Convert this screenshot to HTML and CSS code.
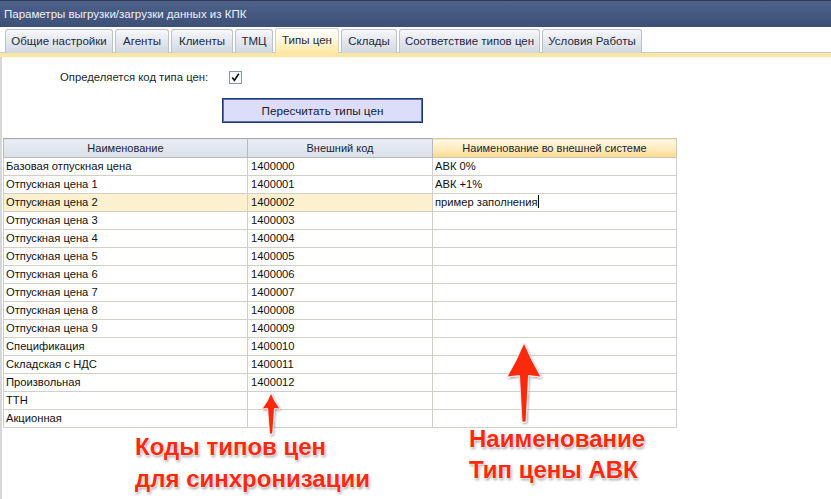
FILE: index.html
```html
<!DOCTYPE html>
<html lang="ru">
<head>
<meta charset="utf-8">
<title>Параметры выгрузки/загрузки данных из КПК</title>
<link rel="stylesheet" href="styles.css">
</head>
<body>
<div class="window">
  <div class="titlebar">Параметры выгрузки/загрузки данных из КПК</div>
  <div class="tabs">
    <div class="tab t1">Общие настройки</div>
    <div class="tab t2">Агенты</div>
    <div class="tab t3">Клиенты</div>
    <div class="tab t4">ТМЦ</div>
    <div class="tab t5 active">Типы цен</div>
    <div class="tab t6">Склады</div>
    <div class="tab t7">Соответствие типов цен</div>
    <div class="tab t8">Условия Работы</div>
  </div>
  <div class="band"></div>
  <div class="content">
    <div class="option">
      <span class="label">Определяется код типа цен:</span>
      <span class="checkbox">
        <svg width="11" height="11" viewBox="0 0 11 11"><path d="M2.2 5.6 L4.4 8.3 L8.8 1.8" fill="none" stroke="#111" stroke-width="1.6"/></svg>
      </span>
    </div>
    <div class="btnrow"><button class="btn">Пересчитать типы цен</button></div>
    <table class="grid">
      <colgroup><col class="c1"><col class="c2"><col class="c3"></colgroup>
      <thead>
        <tr><th>Наименование</th><th>Внешний код</th><th class="hot">Наименование во внешней системе</th></tr>
      </thead>
      <tbody>
        <tr><td>Базовая отпускная цена</td><td>1400000</td><td>АВК 0%</td></tr>
        <tr><td>Отпускная цена 1</td><td>1400001</td><td>АВК +1%</td></tr>
        <tr class="sel"><td>Отпускная цена 2</td><td>1400002</td><td class="edit">пример заполнения<span class="caret"></span></td></tr>
        <tr><td>Отпускная цена 3</td><td>1400003</td><td></td></tr>
        <tr><td>Отпускная цена 4</td><td>1400004</td><td></td></tr>
        <tr><td>Отпускная цена 5</td><td>1400005</td><td></td></tr>
        <tr><td>Отпускная цена 6</td><td>1400006</td><td></td></tr>
        <tr><td>Отпускная цена 7</td><td>1400007</td><td></td></tr>
        <tr><td>Отпускная цена 8</td><td>1400008</td><td></td></tr>
        <tr><td>Отпускная цена 9</td><td>1400009</td><td></td></tr>
        <tr><td>Спецификация</td><td>1400010</td><td></td></tr>
        <tr><td>Складская с НДС</td><td>1400011</td><td></td></tr>
        <tr><td>Произвольная</td><td>1400012</td><td></td></tr>
        <tr><td>ТТН</td><td></td><td></td></tr>
        <tr><td>Акционная</td><td></td><td></td></tr>
      </tbody>
    </table>
  </div>

  <svg class="arrows" width="831" height="499" viewBox="0 0 831 499">
    <defs>
      <filter id="sh" x="-50%" y="-50%" width="200%" height="200%">
        <feDropShadow dx="1" dy="1.5" stdDeviation="1.2" flood-color="#000" flood-opacity="0.35"/>
      </filter>
    </defs>
    <path filter="url(#sh)" fill="#fb2a0e" stroke="#fff" stroke-width="0.8" d="M271 393 Q274 401 280 409 L274.5 408.5 L272.6 434 L269.6 434 L267.6 408.5 L262 409 Q268 401 271 393 Z"/>
    <path filter="url(#sh)" fill="#fb2a0e" stroke="#fff" stroke-width="0.8" d="M524 343 Q531 360 541 377 L528.5 375.5 L526 422 L522 422 L519.5 375.5 L507 377 Q517 360 524 343 Z"/>
  </svg>
  <div class="note note-left">Коды типов цен<br>для синхронизации</div>
  <div class="note note-right">Наименование<br>Тип цены АВК</div>
</div>
</body>
</html>
```

FILE: styles.css
```css
* { box-sizing: border-box; }
html, body { margin: 0; padding: 0; background: #fff; }
body { width: 831px; height: 499px; overflow: hidden; font-family: "Liberation Sans", Arial, sans-serif; font-size: 11px; color: #111; }

.window { position: relative; width: 831px; height: 499px; display: flex; flex-direction: column; }

.titlebar {
  height: 27px;
  flex: none;
  background: linear-gradient(#4f628a, #3c4f77);
  border-top: 1px solid #2c3a57;
  color: #eef1f7;
  font-size: 11.5px;
  line-height: 26px;
  padding-left: 4px;
}

.tabs {
  flex: none;
  height: 26px;
  display: flex;
  align-items: flex-end;
  gap: 2px;
  padding-left: 5px;
  border-bottom: 1px solid #c7cbd3;
  background: #fff;
}
.tab {
  height: 24px;
  margin-bottom: -1px;
  border: 1px solid #b9c0cc;
  border-bottom: none;
  border-radius: 3px 3px 0 0;
  background: linear-gradient(#f6f7fa, #e3e7ee 50%, #d2d8e3);
  color: #1d2840;
  text-align: center;
  line-height: 23px;
  white-space: nowrap;
  font-size: 11.5px;
}
.tab.active {
  height: 25px;
  background: linear-gradient(#ffffff, #fff7e0 45%, #fde7a2);
  border-color: #d3d0c4;
  position: relative;
  z-index: 1;
}
.t1 { width: 108px; }
.t2 { width: 54px; }
.t3 { width: 62px; }
.t4 { width: 38px; }
.t5 { width: 64px; }
.t6 { width: 56px; }
.t7 { width: 141px; }
.t8 { width: 100px; }

.band { flex: none; height: 4px; background: #fde6a1; }

.content {
  flex: 1;
  border-left: 2px solid #d6d7da;
  padding-left: 1px;
  background: #fff;
}

.option {
  display: flex;
  align-items: center;
  height: 14px;
  margin-top: 13px;
  padding-left: 57px;
}
.label { color: #1b1f2a; width: 169px; font-size: 11.3px; }
.checkbox {
  width: 13px; height: 13px;
  border: 1px solid #8796ad;
  background: linear-gradient(#f2f4f8, #ffffff);
  display: flex; align-items: center; justify-content: center;
}

.btnrow { margin-top: 14px; padding-left: 219px; }
.btn {
  display: block;
  width: 201px;
  height: 25px;
  margin: 0;
  border: 1px solid #1c3a74;
  box-shadow: inset 0 0 0 1px #5a70a4;
  background: #dcdcfb;
  font-family: "Liberation Sans", Arial, sans-serif;
  font-size: 11.7px;
  color: #171a30;
  padding: 0;
}

.grid {
  margin-top: 15px;
  border-collapse: collapse;
  table-layout: fixed;
  width: 673px;
}
.c1 { width: 244px; }
.c2 { width: 185px; }
.c3 { width: 244px; }
.grid th {
  height: 19px;
  padding: 0;
  font-weight: normal;
  color: #1b2436;
  border: 1px solid #b6b8bc;
  border-top-color: #a3a5aa;
  background: linear-gradient(#e9edf3, #dbe1ea);
  line-height: 17px;
  text-align: center;
}
.grid th.hot { background: linear-gradient(#fff9e6, #fdebbb 55%, #fbd98d); border-color: #cfc8b0; }
.grid td {
  height: 18px;
  padding: 0 2px;
  border: 1px solid #d2cfc6;
  line-height: 17px;
  white-space: nowrap;
  overflow: hidden;
  font-size: 11.2px;
}
.grid td:nth-child(2) { padding-left: 3px; }
.grid tr.sel td { background: #fdf0cf; }
.grid tr.sel td.edit { background: #fff; }
.caret { display: inline-block; width: 1px; height: 13px; background: #000; vertical-align: -2px; }

.arrows { position: absolute; left: 0; top: 0; pointer-events: none; }
.note {
  position: absolute;
  font-family: "Liberation Sans", Arial, sans-serif;
  font-weight: bold;
  font-size: 24px;
  color: #fb2a0e;
  text-shadow: 0 0 2px #fff, 0 0 2px #fff, 1px 2px 3px rgba(0,0,0,0.4);
  white-space: nowrap;
}
.note-left { left: 135px; top: 431px; line-height: 32px; }
.note-right { left: 469px; top: 423px; line-height: 31px; }
```
